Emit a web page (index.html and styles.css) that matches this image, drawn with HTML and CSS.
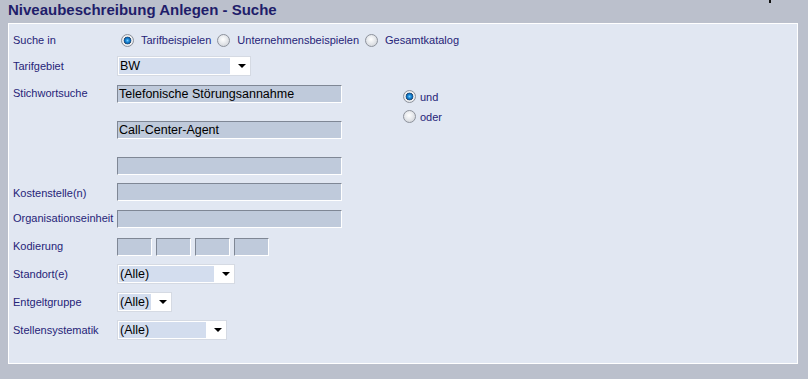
FILE: index.html
```html
<!DOCTYPE html>
<html>
<head>
    <title>Niveaubeschreibung Anlegen - Suche</title>
    <link rel="stylesheet" href="styles.css">
</head>
<body>
    <span class="corner-mark"></span>
    <h1>Niveaubeschreibung Anlegen - Suche</h1>

    <div class="panel">
        <div class="row row-radio">
            <label class="lbl">Suche in</label>
            <div class="radios">
                <span class="opt"><span class="radio checked"></span>Tarifbeispielen</span>
                <span class="opt"><span class="radio"></span>Unternehmensbeispielen</span>
                <span class="opt"><span class="radio"></span>Gesamtkatalog</span>
            </div>
        </div>

        <div class="row row-select">
            <label class="lbl">Tarifgebiet</label>
            <div class="select w-tarif"><span class="sel-val">BW</span><span class="arrow"></span></div>
        </div>

        <div class="row row-keywords">
            <label class="lbl lbl-top">Stichwortsuche</label>
            <div class="keywords">
                <div class="field">Telefonische Störungsannahme</div>
                <div class="field">Call-Center-Agent</div>
                <div class="field"></div>
            </div>
            <div class="logic">
                <span class="opt"><span class="radio checked"></span>und</span>
                <span class="opt"><span class="radio"></span>oder</span>
            </div>
        </div>

        <div class="row row-kosten">
            <label class="lbl">Kostenstelle(n)</label>
            <div class="field"></div>
        </div>

        <div class="row row-org">
            <label class="lbl lbl-top">Organisationseinheit</label>
            <div class="field"></div>
        </div>

        <div class="row row-code">
            <label class="lbl lbl-top">Kodierung</label>
            <div class="codes">
                <div class="field small"></div>
                <div class="field small"></div>
                <div class="field small"></div>
                <div class="field small"></div>
            </div>
        </div>

        <div class="row row-select">
            <label class="lbl">Standort(e)</label>
            <div class="select w-standort"><span class="sel-val">(Alle)</span><span class="arrow"></span></div>
        </div>

        <div class="row row-select">
            <label class="lbl">Entgeltgruppe</label>
            <div class="select w-entgelt"><span class="sel-val">(Alle)</span><span class="arrow"></span></div>
        </div>

        <div class="row row-select">
            <label class="lbl">Stellensystematik</label>
            <div class="select w-stellen"><span class="sel-val">(Alle)</span><span class="arrow"></span></div>
        </div>
    </div>
</body>
</html>
```

FILE: styles.css
```css
body {
    margin: 0;
    height: 379px;
    background: #bbc0cc;
    font-family: "Liberation Sans", Arial, sans-serif;
    font-size: 11px;
    color: #262478;
    overflow: hidden;
    position: relative;
}

.corner-mark {
    position: absolute;
    top: 0;
    left: 769px;
    width: 2px;
    height: 3px;
    background: #111;
}

h1 {
    margin: 0;
    padding: 0 0 0 8px;
    height: 23px;
    box-sizing: border-box;
    font-size: 15px;
    line-height: 20px;
    font-weight: bold;
    color: #1f1d6a;
}

.panel {
    margin-left: 8px;
    width: 790px;
    height: 341px;
    box-sizing: border-box;
    background: #e1e7f2;
    border: 1px solid #fff;
    padding: 8px 0 0 4px;
    display: flex;
    flex-direction: column;
    gap: 8px;
}

.row {
    display: flex;
    align-items: center;
}

.lbl {
    width: 104px;
    flex: none;
}

.lbl-top {
    align-self: flex-start;
    padding-top: 2px;
}

.row-radio { height: 16px; }
.row-select { height: 20px; }
.row-keywords { height: 91px; align-items: flex-start; padding-top: 1px; box-sizing: border-box; }
.row-kosten { height: 19px; align-items: flex-start; }
.row-kosten .lbl { padding-top: 4px; }
.row-org { height: 20px; align-items: flex-start; }
.row-code { height: 18px; align-items: flex-start; }

/* radio buttons */
.radios {
    display: flex;
    align-items: center;
    padding-left: 4px;
}

.opt {
    display: inline-flex;
    align-items: center;
    margin-right: 6px;
}

.radio {
    width: 11px;
    height: 11px;
    border-radius: 50%;
    border: 1px solid #8d929c;
    background: radial-gradient(circle at 45% 40%, #ffffff 0, #eceef1 35%, #c9ccd2 100%);
    margin-right: 7px;
    flex: none;
}

.radio.checked {
    background: radial-gradient(circle at 50% 50%, #7fd0ff 0, #2391dd 1.5px, #0b5fa8 3px, #3a5270 3.6px, #f2f3f5 4.2px, #d3d6db 100%);
}

/* text fields */
.field {
    width: 225px;
    height: 18px;
    box-sizing: border-box;
    background: #bfcadb;
    border-top: 1px solid #7f8795;
    border-left: 1px solid #7f8795;
    border-bottom: 1px solid #fff;
    border-right: 1px solid #fff;
    font-size: 12.5px;
    color: #000;
    line-height: 16px;
    padding-left: 1px;
    white-space: nowrap;
}

.keywords {
    display: flex;
    flex-direction: column;
    gap: 18px;
}

.logic {
    display: flex;
    flex-direction: column;
    gap: 7px;
    margin: 5px 0 0 61px;
}

.logic .radio {
    margin-right: 4px;
}

.codes {
    display: flex;
    gap: 4px;
}

.field.small {
    width: 35px;
}

/* select boxes */
.select {
    height: 20px;
    box-sizing: border-box;
    background: #fff;
    border: 1px solid #d5dae3;
    padding: 1px;
    display: flex;
    align-items: stretch;
}

.sel-val {
    background: #d3ddee;
    color: #000;
    font-size: 12.5px;
    line-height: 16px;
    padding-left: 1px;
    flex: 1;
}

.arrow {
    width: 19px;
    flex: none;
    position: relative;
}

.arrow::after {
    content: "";
    position: absolute;
    left: 8px;
    top: 6px;
    border-left: 4px solid transparent;
    border-right: 4px solid transparent;
    border-top: 4px solid #000;
}

.w-tarif { width: 134px; }
.w-standort { width: 118px; }
.w-entgelt { width: 55px; }
.w-stellen { width: 110px; }
```
